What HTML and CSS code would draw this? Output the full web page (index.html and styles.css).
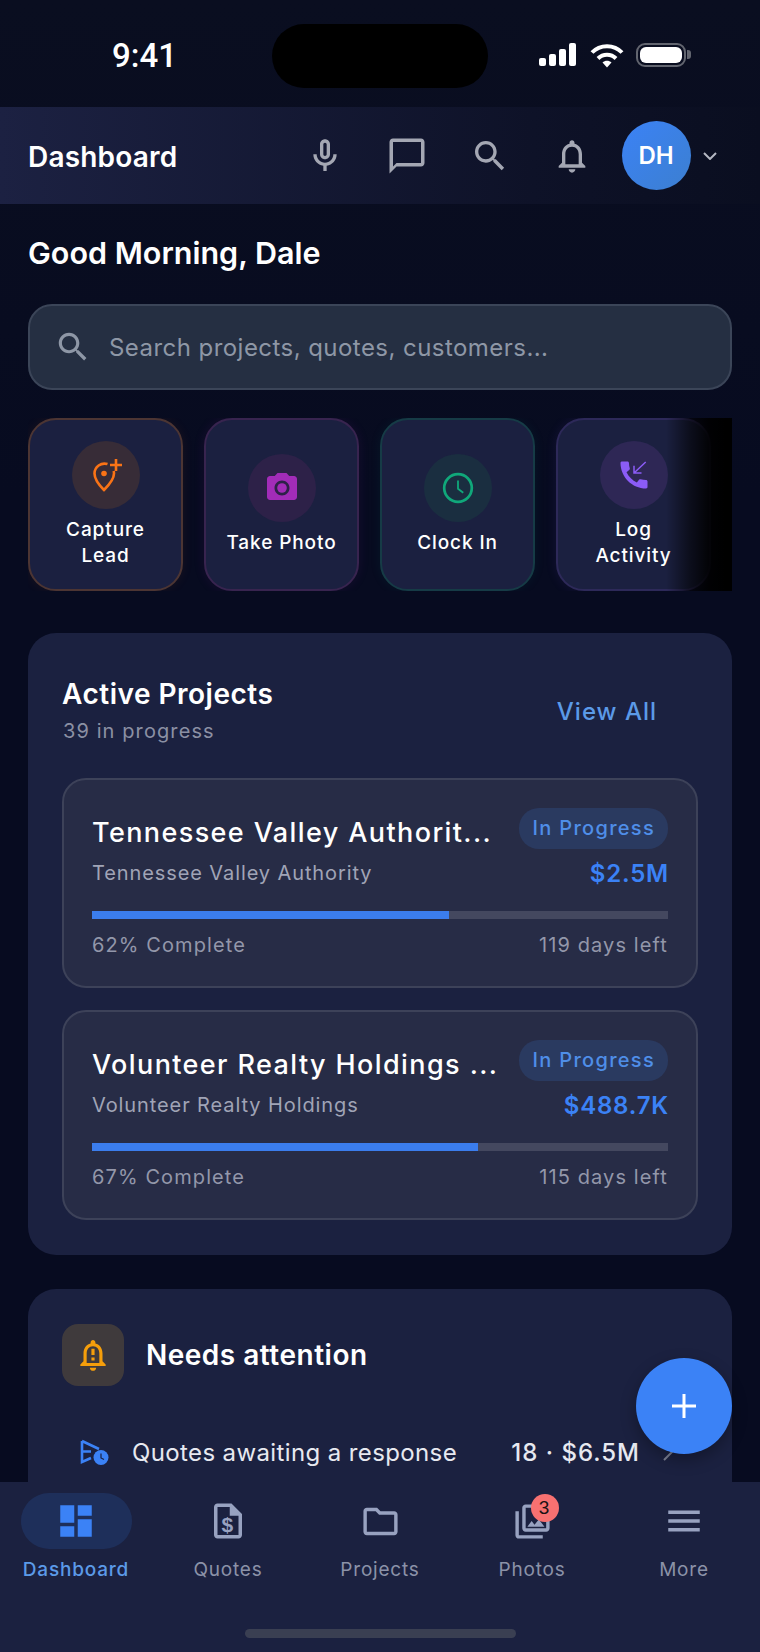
FILE: index.html
```html
<!DOCTYPE html>
<html lang="en">

<head>
    <meta charset="UTF-8">
    <meta name="viewport" content="width=device-width, initial-scale=1.0">
    <title>Dashboard</title>

    <link rel="stylesheet" href="styles.css">
</head>

<body>

    <div class="screen">

        <!-- status bar -->
        <div class="status">
            <span class="time">9:41</span>
            <div class="notch"></div>
            <div class="status-icons">
                <svg width="38" height="24" viewBox="0 0 38 24" fill="#fff">
                    <rect x="0" y="15" width="7" height="8" rx="2"/>
                    <rect x="10" y="11" width="7" height="12" rx="2"/>
                    <rect x="20" y="6" width="7" height="17" rx="2"/>
                    <rect x="30" y="0" width="7" height="23" rx="2"/>
                </svg>
                <svg width="34" height="25" viewBox="0 0 34 25" fill="none" stroke="#fff" stroke-width="4">
                    <path d="M2 9.5C10 1 24 1 32 9.5"/>
                    <path d="M8 15.5C13 10.5 21 10.5 26 15.5"/>
                    <path d="M12.5 19.5L17 24.5L21.500 19.500C19 17 15 17 12.500 19.500Z" fill="#fff" stroke="none"/>
                </svg>
                <div class="battery"><div class="battery-fill"></div></div>
            </div>
        </div>

        <!-- header -->
        <div class="topbar">
            <span class="topbar-title">Dashboard</span>
            <div class="topbar-actions">
                <div class="top-btn">
                    <svg width="40" height="40" viewBox="0 0 24 24"><path d="M12 14c1.660 0 3-1.340 3-3V5c0-1.660-1.340-3-3-3S9 3.340 9 5v6c0 1.660 1.340 3 3 3zm-1-9c0-.55.45-1 1-1s1 .45 1 1v6c0 .55-.45 1-1 1s-1-.45-1-1V5zm6 6c0 2.760-2.240 5-5 5s-5-2.240-5-5H5c0 3.530 2.610 6.430 6 6.920V21h2v-3.080c3.390-.49 6-3.390 6-6.920h-2z"/></svg>
                </div>
                <div class="top-btn">
                    <svg width="42" height="42" viewBox="0 0 24 24"><path d="M20 2H4c-1.100 0-2 .9-2 2v18l4-4h14c1.100 0 2-.9 2-2V4c0-1.100-.9-2-2-2zm0 14H6l-2 2V4h16v12z"/></svg>
                </div>
                <div class="top-btn">
                    <svg width="40" height="40" viewBox="0 0 24 24"><path d="M15.500 14h-.79l-.28-.27C15.410 12.590 16 11.110 16 9.500 16 5.910 13.090 3 9.500 3S3 5.910 3 9.500 5.910 16 9.500 16c1.610 0 3.090-.59 4.230-1.570l.27.28v.79l5 4.990L20.490 19l-4.990-5zm-6 0C7.010 14 5 11.990 5 9.500S7.010 5 9.500 5 14 7.010 14 9.500 11.990 14 9.500 14z"/></svg>
                </div>
                <div class="top-btn">
                    <svg width="40" height="40" viewBox="0 0 24 24"><path d="M12 22c1.100 0 2-.9 2-2h-4c0 1.100.9 2 2 2zm6-6v-5c0-3.070-1.630-5.640-4.500-6.320V4c0-.83-.67-1.500-1.500-1.500s-1.500.67-1.500 1.500v.68C7.640 5.360 6 7.920 6 11v5l-2 2v1h16v-1l-2-2zm-2 1H8v-6c0-2.480 1.510-4.500 4-4.500s4 2.020 4 4.500v6z"/></svg>
                </div>
                <div class="avatar">DH</div>
                <svg class="caret" width="14" height="8" viewBox="0 0 14 8" fill="none"><path d="M1 1l6 6 6-6"/></svg>
            </div>
        </div>

        <div class="content">

            <h1 class="greeting">Good Morning, Dale</h1>

            <div class="search">
                <svg width="38" height="38" viewBox="0 0 24 24"><path d="M15.500 14h-.79l-.28-.27C15.410 12.590 16 11.110 16 9.500 16 5.910 13.090 3 9.500 3S3 5.910 3 9.500 5.910 16 9.500 16c1.610 0 3.090-.59 4.230-1.570l.27.28v.79l5 4.990L20.490 19l-4.990-5zm-6 0C7.010 14 5 11.990 5 9.500S7.010 5 9.500 5 14 7.010 14 9.500 11.990 14 9.500 14z"/></svg>
                <span>Search projects, quotes, customers...</span>
            </div>

            <div class="quick">
                <div class="tile tile-orange">
                    <div class="tile-icon">
                        <svg width="40" height="40" viewBox="0 0 40 40" fill="none" stroke="#f97316" stroke-width="2.600">
                            <path d="M21.500 9.100A10 10 0 0 0 8.500 18.500C8.500 25 14 31 18 35C22 31 28 25 28 18.500C28 17.600 27.900 16.800 27.700 16"/>
                            <circle cx="18" cy="18.500" r="2.800" fill="#f97316" stroke="none"/>
                            <path d="M30 4v12M24 10h12"/>
                        </svg>
                    </div>
                    <span>Capture<br>Lead</span>
                </div>
                <div class="tile tile-purple">
                    <div class="tile-icon">
                        <svg width="36" height="36" viewBox="0 0 24 24" fill="#a22cb8">
                            <path fill-rule="evenodd" d="M9 2L7.170 4H4c-1.100 0-2 .9-2 2v12c0 1.100.9 2 2 2h16c1.100 0 2-.9 2-2V6c0-1.100-.9-2-2-2h-3.170L15 2H9zm3 15c-2.760 0-5-2.240-5-5s2.240-5 5-5 5 2.240 5 5-2.240 5-5 5z"/>
                            <circle cx="12" cy="12" r="3.200"/>
                        </svg>
                    </div>
                    <span>Take Photo</span>
                </div>
                <div class="tile tile-green">
                    <div class="tile-icon">
                        <svg width="36" height="36" viewBox="0 0 24 24" fill="none" stroke="#10a87a">
                            <circle cx="12" cy="12" r="9.200" stroke-width="1.800"/>
                            <path d="M12 7v5.500l3.500 2.700" stroke-width="1.200"/>
                        </svg>
                    </div>
                    <span>Clock In</span>
                </div>
                <div class="tile tile-violet">
                    <div class="tile-icon">
                        <svg width="36" height="36" viewBox="0 0 24 24" fill="#8b5cf6">
                            <path d="M20.010 15.380c-1.230 0-2.420-.2-3.530-.56-.35-.12-.74-.03-1.010.24l-1.570 1.970c-2.830-1.350-5.480-3.900-6.890-6.830l1.950-1.660c.27-.28.35-.67.24-1.020-.37-1.110-.56-2.300-.56-3.530 0-.54-.45-.99-.99-.99H4.190C3.650 3 3 3.240 3 3.990 3 13.280 10.730 21 20.010 21c.71 0 .99-.63.99-1.180v-3.450c0-.54-.45-.99-.99-.99z"/>
                            <path d="M19.800 3.300L12 10.700M12 5.800v4.900h5" fill="none" stroke="#8b5cf6" stroke-width="1"/>
                        </svg>
                    </div>
                    <span>Log<br>Activity</span>
                </div>
                <div class="quick-fade"></div>
            </div>

            <div class="panel panel-projects">
                <div class="panel-head">
                    <div>
                        <h2 class="panel-title">Active Projects</h2>
                        <div class="panel-sub">39 in progress</div>
                    </div>
                    <span class="view-all">View All</span>
                </div>

                <div class="project">
                    <div class="project-row">
                        <div class="project-name">Tennessee Valley Authorit...</div>
                        <span class="badge">In Progress</span>
                    </div>
                    <div class="project-row2">
                        <span class="project-client">Tennessee Valley Authority</span>
                        <span class="project-amount">$2.5M</span>
                    </div>
                    <div class="bar"><div class="bar-fill" style="width: 62%"></div></div>
                    <div class="project-foot">
                        <span>62% Complete</span>
                        <span>119 days left</span>
                    </div>
                </div>

                <div class="project">
                    <div class="project-row">
                        <div class="project-name">Volunteer Realty Holdings ...</div>
                        <span class="badge">In Progress</span>
                    </div>
                    <div class="project-row2">
                        <span class="project-client">Volunteer Realty Holdings</span>
                        <span class="project-amount">$488.7K</span>
                    </div>
                    <div class="bar"><div class="bar-fill" style="width: 67%"></div></div>
                    <div class="project-foot">
                        <span>67% Complete</span>
                        <span>115 days left</span>
                    </div>
                </div>
            </div>

            <div class="panel panel-attention">
                <div class="attention-head">
                    <div class="attention-icon">
                        <svg width="38" height="38" viewBox="0 0 24 24" fill="#f59e0b">
                            <path d="M12 22c1.100 0 2-.9 2-2h-4c0 1.100.9 2 2 2zm6-6v-5c0-3.070-1.630-5.640-4.500-6.320V4c0-.83-.67-1.500-1.500-1.500s-1.500.67-1.500 1.500v.68C7.640 5.360 6 7.920 6 11v5l-2 2v1h16v-1l-2-2zm-2 1H8v-6c0-2.480 1.510-4.500 4-4.500s4 2.020 4 4.500v6z"/>
                            <path d="M11 8h2v4h-2zM11 13.500h2v2h-2z"/>
                        </svg>
                    </div>
                    <h2 class="panel-title">Needs attention</h2>
                </div>
                <div class="attention-row">
                    <svg width="30" height="28" viewBox="0 0 30 28" fill="none" stroke="#3b82f6" stroke-width="2.600">
                        <path d="M3 3L20 11M3 3V24L12 20M3 13.500H12"/>
                        <circle cx="22" cy="19.500" r="7.500" fill="#3b82f6" stroke="none"/>
                        <path d="M22 15.500v4.500l3 1.500" stroke="#1b2140" stroke-width="1.200"/>
                    </svg>
                    <span class="attention-text">Quotes awaiting a response</span>
                    <span class="attention-value">18 · $6.5M</span>
                    <svg class="attention-arrow" width="12" height="20" viewBox="0 0 12 20" fill="none"><path d="M2 2l8 8-8 8"/></svg>
                </div>
            </div>
        </div>

        <!-- bottom tabs -->
        <div class="tabs">
            <div class="tab tab-active">
                <div class="tab-icon">
                    <svg width="42" height="42" viewBox="0 0 24 24"><path d="M3 13h8V3H3v10zm0 8h8v-6H3v6zm10 0h8V11h-8v10zm0-18v6h8V3h-8z"/></svg>
                </div>
                <span>Dashboard</span>
            </div>
            <div class="tab">
                <div class="tab-icon">
                    <svg width="42" height="42" viewBox="0 0 24 24">
                        <path d="M14 2H6c-1.100 0-2 .9-2 2v16c0 1.100.9 2 2 2h12c1.100 0 2-.9 2-2V8l-6-6zM6 20V4h7v5h5v11H6z"/>
                        <text x="12" y="18" class="dollar">$</text>
                    </svg>
                </div>
                <span>Quotes</span>
            </div>
            <div class="tab">
                <div class="tab-icon">
                    <svg width="41" height="41" viewBox="0 0 24 24"><path d="M9.170 6l2 2H20v10H4V6h5.170M10 4H4c-1.100 0-1.990.9-1.990 2L2 18c0 1.100.9 2 2 2h16c1.100 0 2-.9 2-2V8c0-1.100-.9-2-2-2h-8l-2-2z"/></svg>
                </div>
                <span>Projects</span>
            </div>
            <div class="tab">
                <div class="tab-icon">
                    <svg width="41" height="41" viewBox="0 0 24 24"><path d="M20 4v12H8V4h12m0-2H8c-1.100 0-2 .9-2 2v12c0 1.100.9 2 2 2h12c1.100 0 2-.9 2-2V4c0-1.100-.9-2-2-2zm-8.500 9.670l1.690 2.260 2.480-3.100L19 15H9zM2 6v14c0 1.100.9 2 2 2h14v-2H4V6H2z"/></svg>
                    <span class="tab-badge">3</span>
                </div>
                <span>Photos</span>
            </div>
            <div class="tab">
                <div class="tab-icon">
                    <svg width="42" height="42" viewBox="0 0 24 24"><path d="M3 18h18v-2H3v2zm0-5h18v-2H3v2zm0-7v2h18V6H3z"/></svg>
                </div>
                <span>More</span>
            </div>
            <div class="home-bar"></div>
        </div>

        <div class="fab">
            <svg width="30" height="30" viewBox="0 0 30 30" fill="none"><path d="M15 3v24M3 15h24"/></svg>
        </div>
    </div>

</body>

</html>
```

FILE: styles.css
```css
* {
    box-sizing: border-box;
}

body {
    margin: 0;
    font-family: "Inter", "Liberation Sans", sans-serif;
    background: #070b20;
    color: #fff;
}

h1,
h2 {
    margin: 0;
}

.screen {
    position: relative;
    width: 760px;
    height: 1652px;
    display: flex;
    flex-direction: column;
    overflow: hidden;
    background: linear-gradient(#0a0e20, #070b20 30%, #070b20);
}

/* status bar */
.status {
    position: relative;
    height: 107px;
    flex-shrink: 0;
}

.time {
    position: absolute;
    left: 112px;
    top: 37px;
    font: 500 33px/38px "Roboto", sans-serif;
}

.notch {
    position: absolute;
    left: 272px;
    top: 24px;
    width: 216px;
    height: 64px;
    border-radius: 32px;
    background: #000;
}

.status-icons {
    position: absolute;
    left: 539px;
    top: 43px;
    display: flex;
    align-items: flex-start;
    gap: 13px;
}

.battery {
    position: relative;
    width: 50px;
    height: 24px;
    margin-left: -1px;
    padding: 2px;
    border: 2px solid #62656f;
    border-radius: 9px;
}

.battery::after {
    content: "";
    position: absolute;
    right: -7px;
    top: 5px;
    width: 4px;
    height: 9px;
    border-radius: 0 3px 3px 0;
    background: #62656f;
}

.battery-fill {
    height: 100%;
    border-radius: 6px;
    background: #fff;
}

/* header */
.topbar {
    height: 97px;
    flex-shrink: 0;
    display: flex;
    align-items: center;
    padding: 0 43px 0 28px;
    background: linear-gradient(90deg, #1c2142, #0e1228 70%, #0a0e20);
}

.topbar-title {
    font-size: 28px;
    font-weight: 600;
    letter-spacing: 0.2px;
    margin-top: 2px;
}

.topbar-actions {
    margin-left: auto;
    display: flex;
    align-items: center;
    gap: 42.5px;
}

.top-btn {
    width: 40px;
    height: 40px;
    display: flex;
    align-items: center;
    justify-content: center;
}

.top-btn svg {
    flex-shrink: 0;
    fill: #a4a7b3;
}

.avatar {
    width: 69px;
    height: 69px;
    margin-left: -13px;
    margin-right: -30px;
    border-radius: 50%;
    display: flex;
    align-items: center;
    justify-content: center;
    background: linear-gradient(135deg, #3b82f6, #3c7fd0);
    font-size: 24px;
    font-weight: 600;
}

.caret {
    stroke: #b4b7c2;
    stroke-width: 2;
}

/* main column */
.content {
    flex: 1;
    min-height: 0;
    overflow: hidden;
    padding: 29px 28px 0;
}

.greeting {
    font-size: 30.5px;
    font-weight: 600;
    line-height: 40px;
}

.search {
    height: 86px;
    margin-top: 31px;
    padding: 0 24px;
    display: flex;
    align-items: center;
    gap: 17px;
    border: 2px solid #3b4558;
    border-radius: 24px;
    background: #252f42;
    color: #8e97a6;
    font-size: 24px;
    letter-spacing: 0.45px;
}

.search svg {
    fill: #8e97a6;
    flex-shrink: 0;
}

/* quick actions */
.quick {
    position: relative;
    display: flex;
    gap: 21px;
    margin-top: 28px;
    height: 173px;
    overflow: hidden;
}

.quick-fade {
    position: absolute;
    right: 0;
    top: 0;
    bottom: 0;
    width: 66px;
    background: linear-gradient(90deg, rgba(0, 0, 0, 0), rgba(0, 0, 0, .55) 35%, rgba(0, 0, 0, .9) 65%, #000 90%);
}

.tile {
    width: 155px;
    flex-shrink: 0;
    display: flex;
    flex-direction: column;
    align-items: center;
    justify-content: center;
    gap: 8px;
    border: 2px solid;
    border-radius: 28px;
    background: #1b2040;
    font-size: 19px;
    line-height: 26px;
    font-weight: 500;
    letter-spacing: 0.9px;
    text-align: center;
}

.tile-icon {
    width: 68px;
    height: 68px;
    border-radius: 50%;
    display: flex;
    align-items: center;
    justify-content: center;
}

.tile-orange {
    border-color: #4c3533;
    box-shadow: 0 0 12px rgba(249, 115, 22, .08);
}

.tile-orange .tile-icon {
    background: #372c37;
}

.tile-purple {
    border-color: #38244f;
    box-shadow: 0 0 12px rgba(162, 44, 184, .1);
}

.tile-purple .tile-icon {
    background: #2d2148;
}

.tile-green {
    border-color: #163b46;
    box-shadow: 0 0 12px rgba(16, 168, 122, .08);
}

.tile-green .tile-icon {
    background: #1a2e40;
}

.tile-violet {
    border-color: #2d2959;
    box-shadow: 0 0 12px rgba(139, 92, 246, .1);
}

.tile-violet .tile-icon {
    background: #2e2755;
}

/* cards */
.panel {
    margin-top: 42px;
    padding: 36px 34px;
    border-radius: 28px;
    background: #1b2140;
}

.panel-projects {
    padding-bottom: 35px;
}

.panel-head {
    display: flex;
    justify-content: space-between;
    align-items: center;
    margin-bottom: 35px;
}

.panel-title {
    font-size: 28px;
    font-weight: 600;
    line-height: 50px;
    letter-spacing: 0.5px;
}

.panel-sub {
    padding-left: 1px;
    font-size: 20px;
    line-height: 24px;
    letter-spacing: 1.1px;
    color: #8b90a4;
}

.view-all {
    margin: 10px 41px 0 0;
    font-size: 24px;
    font-weight: 500;
    letter-spacing: 1px;
    color: #5b9ae8;
}

.project {
    padding: 28px;
    margin-top: 22px;
    border: 2px solid #3d4259;
    border-radius: 24px;
    background: #272c46;
}

.panel-head + .project {
    margin-top: 0;
}

.project-row {
    display: flex;
    align-items: flex-start;
    justify-content: space-between;
    height: 49px;
}

.project-name {
    white-space: nowrap;
    font-size: 27px;
    font-weight: 500;
    line-height: 50px;
    letter-spacing: 1.4px;
}

.badge {
    height: 41px;
    padding: 0 13px 0 14px;
    border-radius: 20px;
    background: #2a3a60;
    color: #4f8ee8;
    font-size: 20px;
    font-weight: 500;
    line-height: 41px;
    letter-spacing: 1.3px;
    white-space: nowrap;
}

.project-row2 {
    display: flex;
    justify-content: space-between;
    align-items: center;
    height: 32px;
}

.project-client {
    font-size: 20px;
    letter-spacing: 0.9px;
    color: #a0a4b6;
}

.project-amount {
    margin-right: -1px;
    font-size: 24px;
    font-weight: 600;
    letter-spacing: 0.8px;
    color: #3b82f6;
}

.bar {
    height: 8px;
    margin-top: 22px;
    background: #44485f;
}

.bar-fill {
    height: 100%;
    background: #3b7ded;
}

.project-foot {
    display: flex;
    justify-content: space-between;
    margin-top: 13px;
    font-size: 20px;
    line-height: 26px;
    letter-spacing: 1.1px;
    color: #9397aa;
}

.panel-attention {
    margin-top: 34px;
    padding-top: 35px;
    padding-bottom: 60px;
}

.attention-head {
    display: flex;
    align-items: center;
    gap: 22px;
}

.attention-icon {
    width: 62px;
    height: 62px;
    border-radius: 16px;
    display: flex;
    align-items: center;
    justify-content: center;
    background: #3f3a3c;
}

.attention-row {
    display: flex;
    align-items: center;
    margin-top: 46px;
    padding-left: 17px;
    height: 40px;
}

.attention-text {
    margin-left: 23px;
    font-size: 24px;
    letter-spacing: 0.38px;
    color: #e7e9f0;
}

.attention-value {
    margin-left: auto;
    font-size: 24px;
    font-weight: 500;
    letter-spacing: 1px;
    color: #e7e9f0;
}

.attention-arrow {
    margin: 0 24px 0 22px;
    stroke: #7c8194;
    stroke-width: 2;
}

/* bottom tabs */
.tabs {
    position: relative;
    height: 170px;
    flex-shrink: 0;
    display: flex;
    padding-top: 11px;
    background: #1b2140;
}

.tab {
    width: 152px;
    display: flex;
    flex-direction: column;
    align-items: center;
    color: #8b92a8;
    font-size: 19px;
    line-height: 26px;
    letter-spacing: 0.8px;
}

.tab-icon {
    position: relative;
    width: 111px;
    height: 56px;
    margin-bottom: 8px;
    border-radius: 28px;
    display: flex;
    align-items: center;
    justify-content: center;
}

.tab-icon svg {
    fill: #98a2c0;
}

.tab-active {
    color: #5b9ae8;
    font-weight: 500;
}

.tab-active .tab-icon {
    background: #1e2f5a;
}

.tab-active .tab-icon svg {
    fill: #3b82f6;
}

.dollar {
    font-family: "Liberation Sans", sans-serif;
    font-size: 12px;
    font-weight: 700;
    text-anchor: middle;
}

.tab-badge {
    position: absolute;
    left: 54px;
    top: 1px;
    width: 28px;
    height: 28px;
    border-radius: 50%;
    background: #f87171;
    color: #1b1114;
    font: 19px/28px "Liberation Sans", sans-serif;
    text-align: center;
}

.home-bar {
    position: absolute;
    left: 245px;
    bottom: 14px;
    width: 271px;
    height: 9px;
    border-radius: 5px;
    background: #3a3f52;
}

.fab {
    position: absolute;
    left: 636px;
    top: 1358px;
    width: 96px;
    height: 96px;
    border-radius: 50%;
    display: flex;
    align-items: center;
    justify-content: center;
    background: #3b82f6;
    box-shadow: 0 6px 16px rgba(0, 0, 0, .3);
}

.fab svg {
    stroke: #fff;
    stroke-width: 3;
}
```
